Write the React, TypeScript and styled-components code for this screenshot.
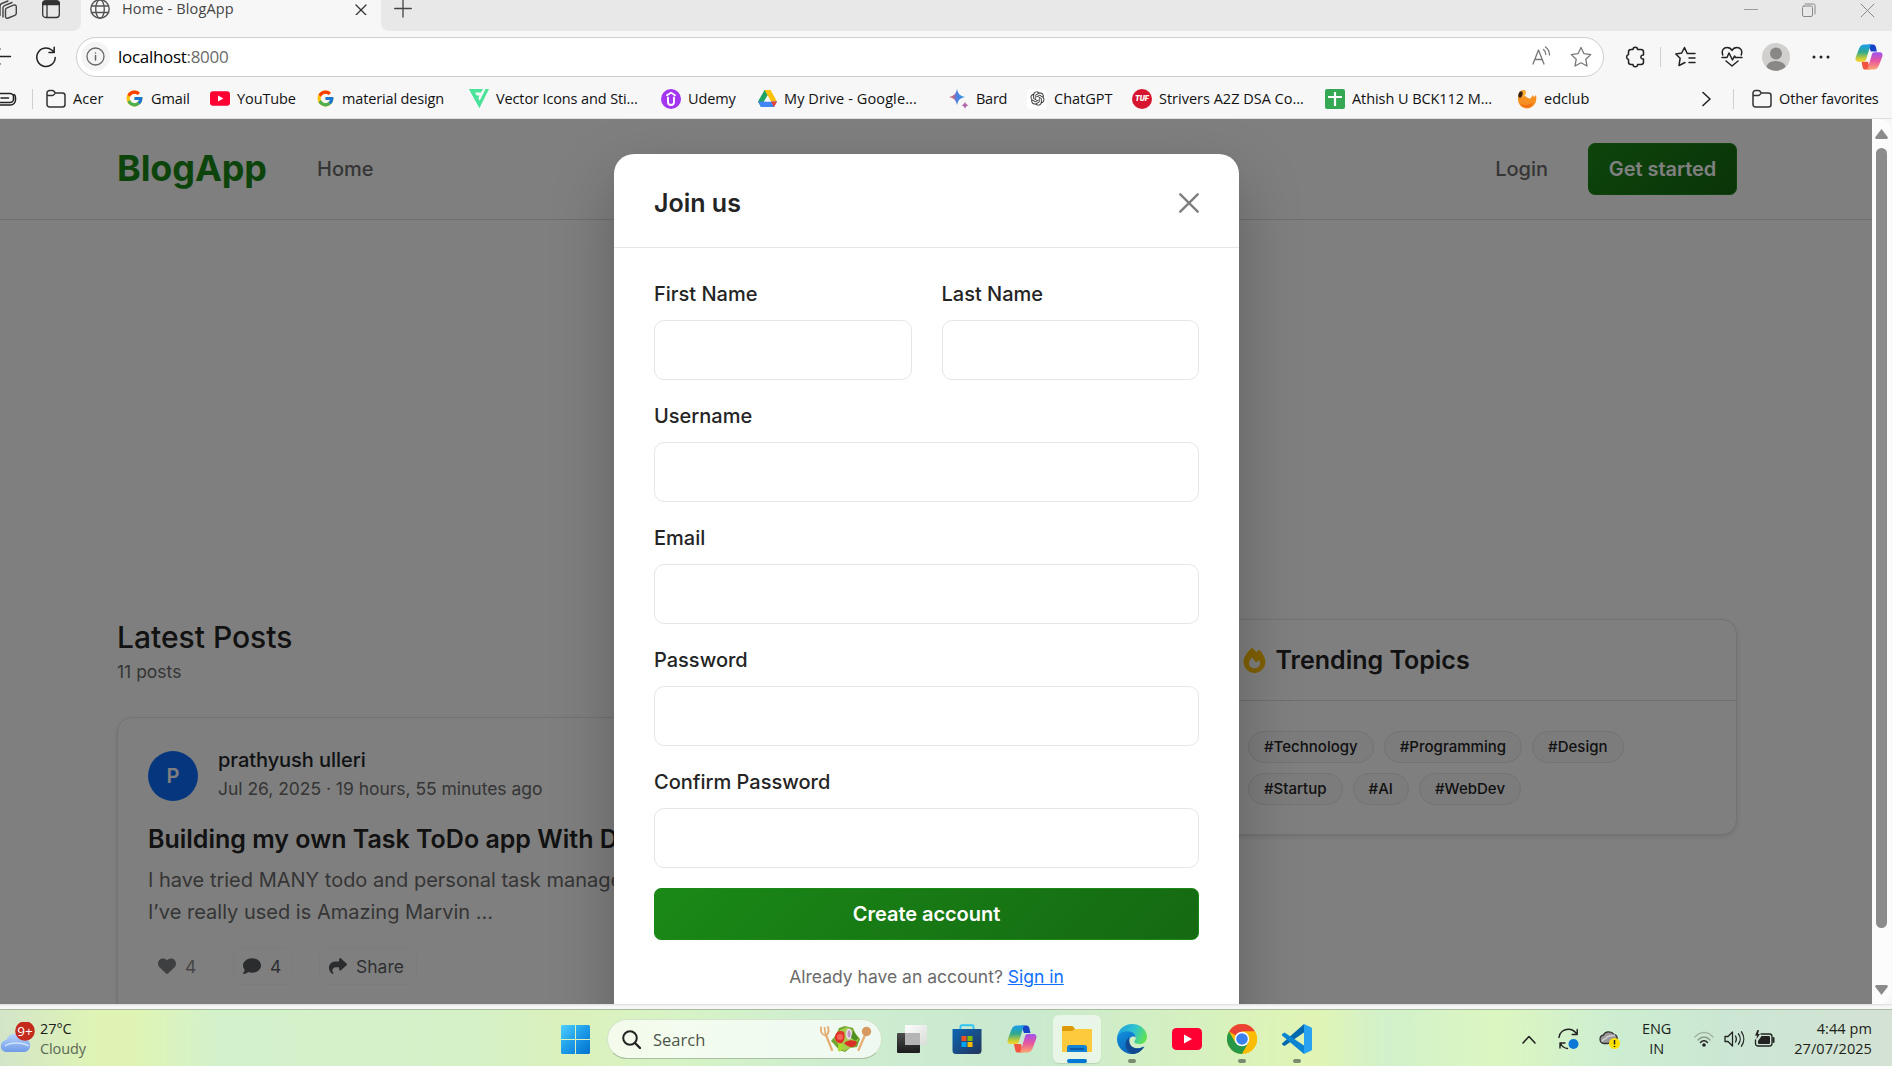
import React from "react";
import styled, { createGlobalStyle } from "styled-components";
import { FaComment, FaFire, FaHeart, FaShare } from "react-icons/fa6";
import { FcGoogle } from "react-icons/fc";
import { RiOpenaiFill } from "react-icons/ri";

const GlobalStyle = createGlobalStyle`
  * { box-sizing: border-box; }
  html, body { margin: 0; padding: 0; overflow: hidden; }
  body { font-family: "Inter", "Liberation Sans", sans-serif; }
  svg { display: block; flex: none; }
`;

const Desktop = styled.div`
  width: 1892px;
  height: 1066px;
  display: flex;
  flex-direction: column;
  overflow: hidden;
  background: #f7f7f7;
`;

/* ---------- browser chrome ---------- */

const uiFont = `"Open Sans", "Noto Sans", sans-serif`;

const TabStrip = styled.div`
  height: 31px;
  display: flex;
  background: #f7f7f7;
  font-family: ${uiFont};
  overflow: hidden;
`;

const StripLeft = styled.div`
  width: 81px;
  display: flex;
  gap: 25px;
  padding-left: 0;
  background: #e8e8e8;
  border-bottom-right-radius: 8px;
`;

const Tab = styled.div`
  width: 300px;
  height: 18px;
  display: flex;
  align-items: center;
  padding: 0 14px 0 9px;
`;

const TabTitle = styled.span`
  flex: 1;
  padding-left: 12px;
  font-size: 14.5px;
  line-height: 18px;
  letter-spacing: 0.15px;
  color: #444;
`;

const StripRight = styled.div`
  flex: 1;
  display: flex;
  justify-content: space-between;
  padding: 0 17px 0 13px;
  background: #e8e8e8;
  border-bottom-left-radius: 8px;
`;

const WindowButtons = styled.div`
  display: flex;
  gap: 44px;
  padding-top: 3px;
`;

const Toolbar = styled.div`
  height: 51px;
  display: flex;
  align-items: center;
  font-family: ${uiFont};
`;

const NavButtons = styled.div`
  width: 76px;
  display: flex;
  align-items: center;
  gap: 23px;
`;

const AddressBar = styled.div`
  width: 1528px;
  height: 40px;
  display: flex;
  align-items: center;
  padding: 0 11px 0 4px;
  border: 1px solid #cdcdcd;
  border-radius: 20px;
  background: #fff;
`;

const SiteInfo = styled.div`
  width: 29px;
  height: 29px;
  display: flex;
  align-items: center;
  justify-content: center;
  border-radius: 50%;
  background: #f4f4f4;
`;

const Url = styled.span`
  flex: 1;
  padding-left: 8px;
  font-size: 17px;
  letter-spacing: -0.3px;
  color: #000;
`;

const Port = styled.span`
  color: #6b6b6b;
`;

const BarIcons = styled.div`
  display: flex;
  gap: 19px;
`;

const ToolIcons = styled.div`
  flex: 1;
  display: flex;
  align-items: center;
  padding-left: 21px;
`;

const Slot = styled.div<{ $w: number }>`
  width: ${(p) => p.$w}px;
  flex: none;
  display: flex;
  align-items: center;
`;

const Divider = styled.div`
  width: 1px;
  height: 20px;
  flex: none;
  background: #cfcfcf;
`;

const Favorites = styled.div`
  height: 37px;
  display: flex;
  align-items: center;
  padding-bottom: 3px;
  border-bottom: 1px solid #dedede;
  font-family: ${uiFont};
`;

const Favorite = styled.div<{ $w: number }>`
  width: ${(p) => p.$w}px;
  flex: none;
  display: flex;
  align-items: center;
  gap: 7px;
`;

const FavoriteIcon = styled.div`
  width: 20px;
  height: 20px;
  flex: none;
  display: flex;
  align-items: center;
  justify-content: center;
`;

const FavoriteLabel = styled.span<{ $ls: number }>`
  font-size: 14.5px;
  line-height: 20px;
  letter-spacing: ${(p) => p.$ls}px;
  white-space: nowrap;
  color: #111;
`;

/* ---------- page ---------- */

const Viewport = styled.div`
  position: relative;
  height: 885px;
  display: flex;
  overflow: hidden;
`;

const Page = styled.div`
  position: relative;
  width: 1872px;
  height: 885px;
  overflow: hidden;
  background: #fff;
`;

const Scrollbar = styled.div`
  width: 19px;
  display: flex;
  flex-direction: column;
  align-items: center;
  padding: 10px 1px 9px 0;
  background: #fcfcfc;
  border-radius: 0 12px 12px 0;
`;

const Thumb = styled.div`
  width: 11px;
  height: 780px;
  margin: 9px 0 57px;
  border-radius: 6px;
  background: #8b8b8b;
`;

const SiteHeader = styled.header`
  height: 101px;
  display: flex;
  align-items: center;
  padding: 0 135px 0 117px;
  border-bottom: 1px solid #e1e1e1;
`;

const Brand = styled.div`
  width: 200px;
  padding-bottom: 2px;
  font-size: 36px;
  font-weight: 700;
  letter-spacing: -0.1px;
  color: #1a8917;
`;

const NavLink = styled.a`
  font-size: 20px;
  font-weight: 500;
  color: #6b6b6b;
`;

const NavEnd = styled.nav`
  margin-left: auto;
  display: flex;
  align-items: center;
  gap: 40px;
`;

const GreenButton = styled.button<{ $w: string }>`
  width: ${(p) => p.$w};
  height: 52px;
  border: 1px solid #1a8917;
  border-radius: 7px;
  background: linear-gradient(135deg, #1a8917 0%, #156912 100%);
  color: #fff;
  font: 600 20px "Inter", sans-serif;
  letter-spacing: -0.05px;
`;

const Main = styled.main`
  display: flex;
  gap: 30px;
  padding: 399px 135px 0 117px;
`;

const Feed = styled.section`
  flex: 1;
`;

const FeedTitle = styled.h2`
  margin: 0;
  font-size: 30px;
  line-height: 36px;
  font-weight: 500;
  color: #242424;
`;

const FeedCount = styled.p`
  margin: 3px 0 31px;
  font-size: 17.5px;
  line-height: 28px;
  color: #6b6b6b;
`;

const Card = styled.article`
  border: 1px solid #e6e6e6;
  border-radius: 15px;
  background: #fff;
  box-shadow: 0 2px 5px rgba(0, 0, 0, 0.12);
`;

const PostCard = styled(Card)`
  height: 420px;
  padding: 27px 30px;
`;

const Author = styled.div`
  display: flex;
  align-items: center;
  gap: 20px;
`;

const Avatar = styled.div`
  width: 50px;
  height: 50px;
  margin-top: 4px;
  display: flex;
  align-items: center;
  justify-content: center;
  border-radius: 50%;
  background: #0d6efd;
  color: #fff;
  font-size: 20px;
  font-weight: 600;
`;

const AuthorName = styled.div`
  font-size: 20px;
  line-height: 30px;
  font-weight: 500;
  letter-spacing: -0.05px;
  color: #212529;
`;

const PostDate = styled.div`
  font-size: 17.5px;
  line-height: 28px;
  letter-spacing: -0.03px;
  color: #6b6b6b;
`;

const PostTitle = styled.h3`
  margin: 20px 0 9px;
  font-size: 25px;
  line-height: 32px;
  font-weight: 600;
  white-space: nowrap;
  color: #242424;
`;

const Excerpt = styled.p`
  margin: 0;
  font-size: 20px;
  line-height: 32px;
  color: #6b6b6b;
`;

const Actions = styled.div`
  display: flex;
  align-items: center;
  gap: 26px;
  margin-top: 19px;
`;

const Action = styled.div<{ $w: number; $muted?: boolean }>`
  width: ${(p) => p.$w}px;
  height: 38px;
  display: flex;
  align-items: center;
  gap: 9px;
  padding-left: 9px;
  border: 1px solid ${(p) => (p.$muted ? "transparent" : "#f8f9fa")};
  border-radius: 8px;
  font-size: 17.5px;
  color: ${(p) => (p.$muted ? "#8d8d8d" : "#5c5f63")};
`;

const ActionIcon = styled.span<{ $dark?: boolean }>`
  display: flex;
  color: ${(p) => (p.$dark ? "#55585b" : "#7c7f82")};
`;

const Sidebar = styled.aside`
  width: 525px;
`;

const CardHead = styled.div`
  height: 81px;
  display: flex;
  align-items: center;
  gap: 9px;
  padding: 0 28.5px;
  border-bottom: 1px solid #e1e1e1;
`;

const CardHeading = styled.h4`
  margin: 0;
  font-size: 25px;
  font-weight: 600;
  color: #242424;
`;

const Chips = styled.div`
  display: flex;
  flex-wrap: wrap;
  gap: 10px;
  padding: 30px 80px 29px 35px;
`;

const Chip = styled.span`
  height: 32px;
  display: flex;
  align-items: center;
  padding: 0 15px 1px;
  border: 1px solid #e6e6e6;
  border-radius: 16px;
  background: #f8f9fa;
  font-size: 15px;
  font-weight: 500;
  letter-spacing: 0.02px;
  color: #242424;
`;

/* ---------- modal ---------- */

const Backdrop = styled.div`
  position: absolute;
  inset: 0;
  padding: 35px 0 0 614px;
  background: rgba(0, 0, 0, 0.5);
`;

const Dialog = styled.div`
  width: 625px;
  height: 960px;
  border-radius: 20px;
  background: #fff;
  box-shadow: 0 25px 62px rgba(0, 0, 0, 0.25);
`;

const DialogHead = styled.div`
  height: 94px;
  display: flex;
  align-items: center;
  justify-content: space-between;
  padding: 4px 40px 0;
  border-bottom: 1px solid #e6e6e6;
`;

const DialogTitle = styled.h5`
  margin: 0;
  font-size: 25px;
  line-height: 36px;
  font-weight: 600;
  color: #242424;
`;

const Form = styled.form`
  display: flex;
  flex-direction: column;
  gap: 20px;
  padding: 30px 40px;
`;

const FieldRow = styled.div`
  display: grid;
  grid-template-columns: 1fr 1fr;
  gap: 30px;
`;

const Field = styled.label`
  display: flex;
  flex-direction: column;
  gap: 10px;
  font-size: 20px;
  line-height: 32px;
  font-weight: 500;
  color: #242424;
`;

const Input = styled.input`
  width: 100%;
  height: 60px;
  border: 1px solid #e6e6e6;
  border-radius: 10px;
  background: #fff;
  outline: none;
`;

const SignIn = styled.p`
  margin: 3px 0 0;
  text-align: center;
  font-size: 17.5px;
  line-height: 28px;
  color: #6b6b6b;
`;

const Link = styled.a`
  color: #0d6efd;
  text-decoration: underline;
`;

/* ---------- taskbar ---------- */

const Gap = styled.div`
  height: 5px;
  background: linear-gradient(#dedede, #f7f7f7 50%);
`;

const Taskbar = styled.footer`
  height: 57px;
  display: flex;
  align-items: center;
  padding-top: 2px;
  border-top: 1px solid #a9bb9f;
  font-family: ${uiFont};
  background: linear-gradient(
    90deg,
    #d3e5c8 0,
    #dff4b4 100px,
    #dff4b4 135px,
    #d3f1cb 215px,
    #d5f1c8 470px,
    #dbf1bb 570px,
    #d6f3c6 680px,
    #ceedd0 830px,
    #c9e9d0 1020px,
    #d6f1bf 1200px,
    #e0f4b4 1315px,
    #d2f1cb 1385px,
    #dcf6c0 1500px,
    #cdeed1 1610px,
    #cbe7d3 1720px,
    #d4e2d3 1892px
  );
`;

const Weather = styled.div`
  width: 561px;
  display: flex;
  align-items: center;
  gap: 9px;
`;

const Lines = styled.div<{ $align?: string }>`
  display: flex;
  flex-direction: column;
  align-items: ${(p) => p.$align || "flex-start"};
  font-size: 14.5px;
  line-height: 20px;
  letter-spacing: -0.1px;
  color: #1c1f1a;
  white-space: nowrap;
`;

const Muted = styled.span`
  color: #5b6856;
`;

const SearchBox = styled.div`
  width: 275px;
  height: 40px;
  display: flex;
  align-items: center;
  margin: 0 6px 0 17px;
  padding: 0 9px 0 14px;
  border: 1px solid #d3e4ca;
  border-bottom-color: #a8bfa0;
  border-radius: 20px;
  background: rgba(255, 255, 255, 0.7);
`;

const SearchText = styled.span`
  flex: 1;
  padding-left: 12px;
  font-size: 16.5px;
  color: #4d554a;
`;

const AppTile = styled.div<{ $active?: boolean }>`
  position: relative;
  width: 48px;
  height: 48px;
  margin-right: 7px;
  flex: none;
  display: flex;
  align-items: center;
  justify-content: center;
  border-radius: 6px;
  background: ${(p) => (p.$active ? "rgba(255,255,255,0.55)" : "transparent")};
  box-shadow: ${(p) => (p.$active ? "0 1px 1px rgba(0,0,0,0.1)" : "none")};
`;

const Indicator = styled.span<{ $active?: boolean }>`
  position: absolute;
  bottom: 0;
  left: ${(p) => (p.$active ? 14 : 20)}px;
  width: ${(p) => (p.$active ? 20 : 8)}px;
  height: 4px;
  border-radius: 2px;
  background: ${(p) => (p.$active ? "#0078d4" : "#7b8b70")};
`;

const Tray = styled.div`
  flex: 1;
  display: flex;
  align-items: center;
  justify-content: flex-end;
  padding-right: 20px;
`;

const Clock = styled(Lines)`
  width: 100%;
  align-items: flex-end;
  letter-spacing: 0.08px;
`;

/* ---------- icons ---------- */

const line = { fill: "none", strokeLinecap: "round" as const, strokeLinejoin: "round" as const };

const FolderIcon = () => (
  <svg width="20" height="20" viewBox="0 0 20 20" {...line} stroke="#333" strokeWidth="1.5">
    <path d="M1 4a2.500 2.500 0 0 1 2.500-2.500h3C7.500 1.500 8 2 9 3.500l.5.500h7A2.500 2.500 0 0 1 19 6.500v9a2.500 2.500 0 0 1-2.500 2.500h-13A2.500 2.500 0 0 1 1 15.500zM1 6.500h5.500C8 6.500 8 5 9.500 4" />
  </svg>
);

const YouTubeIcon = ({ w, h }: { w: number; h: number }) => (
  <svg width={w} height={h} viewBox="0 0 30 22">
    <rect width="30" height="22" rx="4.5" fill="#ff0033" />
    <path d="M12 6.500l8 4.500-8 4.500z" fill="#fff" />
  </svg>
);

const CopilotIcon = ({ id, size }: { id: string; size: number }) => (
  <svg width={size} height={size} viewBox="0 0 30 30">
    <defs>
      <linearGradient id={id + "a"} x1="0" y1="0" x2="0" y2="1">
        <stop offset="0" stopColor="#1a9bf0" />
        <stop offset=".45" stopColor="#30a98c" />
        <stop offset=".8" stopColor="#c4cc3a" />
        <stop offset="1" stopColor="#f8d52c" />
      </linearGradient>
      <linearGradient id={id + "b"} x1="0" y1="0" x2="0" y2="1">
        <stop offset="0" stopColor="#a052ec" />
        <stop offset=".5" stopColor="#e8569f" />
        <stop offset="1" stopColor="#fba66c" />
      </linearGradient>
    </defs>
    <path d="M14 1.500h5.500c1.600 0 2.300 1 2.800 2.600L23.500 9H17z" fill="#1743c8" />
    <path d="M16 28.500h-5c-1.600 0-2.400-1-2.800-2.600L7 20h7z" fill="#f2553f" />
    <path d="M10 1.500h8.500c-1.300 0-2 1-2.400 2.300L12 17.500C11.500 19.300 10.600 20 9 20H3.500C1 20 0 18 .700 15.500L4.500 5.500C5.500 3 7.300 1.500 10 1.500z" fill={`url(#${id}a)`} />
    <path d="M20 28.500h-8.500c1.300 0 2-1 2.400-2.300L18 12.500C18.500 10.700 19.400 10 21 10h5.500c2.500 0 3.500 2 2.800 4.500l-3.800 10C24.500 27 22.700 28.500 20 28.500z" fill={`url(#${id}b)`} />
  </svg>
);

const UdemyIcon = () => (
  <svg width="20" height="20" viewBox="0 0 20 20" {...line}>
    <circle cx="10" cy="10" r="10" fill="#a435f0" />
    <path d="M6 6.300l4-2.500 4 2.500M7 8.500v4.500a3 3 0 0 0 6 0V8.500" stroke="#fff" strokeWidth="1.900" />
  </svg>
);

const DriveIcon = () => (
  <svg width="19" height="17" viewBox="0 0 19 17">
    <path d="M6.500 0h3.300v5.200L3 17 0 11.500z" fill="#1fa463" />
    <path d="M6.500 0h6L9.500 5.300z" fill="#0f8f4f" />
    <path d="M6.500 0h6L19 11.500h-6z" fill="#ffc107" />
    <path d="M0 11.500h19l-3 5.500H3z" fill="#4285f4" />
    <path d="M13 11.500h6L16 17z" fill="#ea4335" />
    <path d="M9.500 5.500L13 11.500H6z" fill="#f7f7f7" />
  </svg>
);

const BardIcon = () => (
  <svg width="20" height="20" viewBox="0 0 20 20">
    <defs>
      <linearGradient id="bard" x1="0" y1="0" x2="1" y2="0">
        <stop offset="0" stopColor="#b070b0" />
        <stop offset=".2" stopColor="#d96570" />
        <stop offset=".5" stopColor="#4c7fe8" />
        <stop offset="1" stopColor="#2f9bd8" />
      </linearGradient>
    </defs>
    <path d="M8 0c1.200 5 3 6.800 8 8-5 1.200-6.800 3-8 8-1.200-5-3-6.800-8-8 5-1.200 6.800-3 8-8z" fill="url(#bard)" />
    <path d="M16 12.500c.6 2.300 1.400 3.100 3.700 3.700-2.300.6-3.100 1.400-3.700 3.700-.6-2.300-1.400-3.100-3.700-3.700 2.300-.6 3.100-1.400 3.700-3.700z" fill="#b264a8" />
  </svg>
);

const ChatGptBox = styled.div`
  width: 20px;
  height: 20px;
  display: flex;
  align-items: center;
  justify-content: center;
  border-radius: 4px;
  background: #fff;
  color: #333;
`;

const TufBadge = styled.div`
  width: 20px;
  height: 20px;
  display: flex;
  align-items: center;
  justify-content: center;
  border-radius: 50%;
  background: #d8152f;
  color: #fff;
  font: italic 900 7px "Inter", sans-serif;
`;

const SheetsIcon = () => (
  <svg width="20" height="20" viewBox="0 0 20 20">
    <rect width="20" height="20" rx="2" fill="#34a853" />
    <path d="M10 3v14M3 8h14" stroke="#fff" strokeWidth="2.200" />
  </svg>
);

const EdclubIcon = () => (
  <svg width="20" height="20" viewBox="0 0 20 20">
    <path d="M1.500 6C2.500 2 6 0 8 1.500c1.500 1.500 0 4-.5 5.500 2 .5 3.500 2.500 5 2.500S15 8 15 6l2 2 2-2c1.500 7-2 13-9 13.500C3 19.500-.5 13 1.500 6z" fill="#f79023" />
    <path d="M3 14c3 3 9 3 13-1-1 4-4 6-7 5.500S3.500 16 3 14z" fill="#f36c12" />
    <path d="M5 3c2-2.500 5-1.500 4 1L7 8 4 7z" fill="#fbb03b" />
    <ellipse cx="3.500" cy="5.500" rx="2" ry="3.200" fill="#3a2012" transform="rotate(20 3.500 5.500)" />
  </svg>
);

const VectorIcon = () => (
  <svg width="20" height="19" viewBox="0 0 20 19">
    <path d="M0 0h14l-2 3.500H5.500L7 6.500h3.500L9 10H8.500l1.500 3L16.500 0H20l-9.500 19z" fill="#4be39a" />
    <path d="M0 0l10.500 19 1-6L5 2z" fill="#4be39a" />
  </svg>
);

const GlobeIcon = () => (
  <svg width="20" height="22" viewBox="0 0 20 22" {...line} stroke="#555" strokeWidth="1.400">
    <circle cx="10" cy="11" r="9.200" />
    <ellipse cx="10" cy="11" rx="4.300" ry="9.200" />
    <path d="M1.500 8h17M1.500 14.500h17" />
  </svg>
);

const ChromeIcon = () => (
  <svg width="30" height="30" viewBox="0 0 30 30">
    <circle cx="15" cy="15" r="15" fill="#fbbc04" />
    <path d="M15 15L2 7.500A15 15 0 0 1 28 7.500H15z" fill="#ea4335" />
    <path d="M15 15l-6.500 3.700L2 7.500A15 15 0 0 0 15 30l6.500-11.300z" fill="#279847" />
    <path d="M15 7.500h13A15 15 0 0 1 15 30l6.500-11.300z" fill="#fbbc04" />
    <circle cx="15" cy="15" r="7.300" fill="#fff" />
    <circle cx="15" cy="15" r="5.800" fill="#3b82ed" />
  </svg>
);

const EdgeIcon = () => (
  <svg width="30" height="30" viewBox="0 0 30 30">
    <defs>
      <linearGradient id="edgeTop" x1="0" y1=".3" x2="1" y2=".6">
        <stop offset="0" stopColor="#1f9fe0" />
        <stop offset=".55" stopColor="#30c4cc" />
        <stop offset="1" stopColor="#62e34e" />
      </linearGradient>
      <linearGradient id="edgeBody" x1="0" y1="0" x2=".6" y2="1">
        <stop offset="0" stopColor="#1290de" />
        <stop offset="1" stopColor="#0a62b4" />
      </linearGradient>
    </defs>
    <path d="M0 14C.8 5.500 7.500 0 15 0c9 0 15 6.500 15 12.500 0 5-3.500 7.500-7.500 7.500-3 0-5.300-1-5.300-2.300 0-1 1.600-1.700 1.600-4C18.800 10.500 15.500 8 11 8 6 8 1.500 10.500 0 14z" fill="url(#edgeTop)" />
    <path d="M0 15c0-5 5-7.800 10.500-7.800 4.700 0 8.300 2.800 8.300 6.500-1.500-2-6.800-1.500-6.800 3.800 0 6 7 9 14.500 5C24.500 27 20 30 15 30 6.500 30 0 23 0 15z" fill="url(#edgeBody)" />
    <path d="M12 13.500c-5 3.500-5 12.500 3 16.500 5 0 9.500-2.500 12.500-7.500-5 3.300-12.500 2.500-14.500-2.500-1-2.300-.5-5-1-6.500z" fill="#114a91" />
  </svg>
);

const VsCodeIcon = () => (
  <svg width="30" height="30" viewBox="0 0 30 30">
    <path d="M0 19.500L22 0v8.500L2.500 22 0 20.500z" fill="#0069ad" />
    <path d="M0 11.500V10l2.500-1.500L22 21.500V30z" fill="#0a85d1" />
    <path d="M22 0l7 3.200c.7.400 1 .9 1 1.800v20c0 .9-.3 1.400-1 1.800L22 30z" fill="#27a3f2" />
  </svg>
);

const ExplorerIcon = () => (
  <svg width="30" height="28" viewBox="0 0 30 28">
    <path d="M0 8V2.500C0 1.700.6 1 1.500 1h8c1 0 1.600.4 2.500 1.500L13 4v4z" fill="#dc9a08" />
    <path d="M0 6h10.500l2-2H29c.6 0 1 .4 1 1v22H0z" fill="#fdc93d" />
    <path d="M5 27v-4.500C5 21 6 20 7.500 20h15c1.500 0 2.500 1 2.500 2.500V27z" fill="#1282d4" />
    <path d="M8.500 24h13" stroke="#0b4f96" strokeWidth="1.300" strokeLinecap="round" />
  </svg>
);

const StoreIcon = () => (
  <svg width="30" height="30" viewBox="0 0 30 30">
    <defs>
      <linearGradient id="store" x1="0" y1="0" x2="1" y2="1">
        <stop offset="0" stopColor="#0d67b5" />
        <stop offset="1" stopColor="#24335a" />
      </linearGradient>
    </defs>
    <path d="M8.500 6V2.500c0-.8.500-1.300 1.300-1.300h10.400c.8 0 1.300.5 1.300 1.300V6" fill="none" stroke="#2ec4f3" strokeWidth="1.900" />
    <path d="M.5 5h29v21.500a3.500 3.500 0 0 1-3.500 3.500H4a3.500 3.500 0 0 1-3.500-3.500z" fill="url(#store)" />
    <path d="M9.500 12h5v5h-5z" fill="#f25022" />
    <path d="M15.500 12h5v5h-5z" fill="#7fba00" />
    <path d="M9.500 18h5v5h-5z" fill="#00a4ef" />
    <path d="M15.500 18h5v5h-5z" fill="#ffb900" />
  </svg>
);

const TaskViewIcon = () => (
  <svg width="30" height="30" viewBox="0 0 30 30">
    <defs>
      <linearGradient id="taskDark" x1="0" y1="0" x2="0" y2="1">
        <stop offset="0" stopColor="#4c4c4c" />
        <stop offset="1" stopColor="#1c1c1c" />
      </linearGradient>
      <linearGradient id="taskLight" x1="0" y1="0" x2="1" y2="1">
        <stop offset="0" stopColor="#fdfdfd" />
        <stop offset="1" stopColor="#d9dcd9" />
      </linearGradient>
    </defs>
    <rect x="0" y="9" width="23" height="20" rx="1" fill="url(#taskDark)" />
    <rect x="8" y="1" width="22" height="20" rx="1" fill="url(#taskLight)" />
    <path d="M8 9h15v12H8z" fill="#b5b5b5" />
  </svg>
);

const WindowsIcon = () => (
  <svg width="29" height="29" viewBox="0 0 29 29">
    <defs>
      <linearGradient id="win" gradientUnits="userSpaceOnUse" x1="0" y1="0" x2="29" y2="29">
        <stop offset="0" stopColor="#4ccfff" />
        <stop offset=".5" stopColor="#1d9be8" />
        <stop offset="1" stopColor="#0072d0" />
      </linearGradient>
    </defs>
    <path d="M1 0h13v14H0V1zM15 0h13l1 1v13H15zM0 15h14v14H1l-1-1zM15 15h14v13l-1 1H15z" fill="url(#win)" />
  </svg>
);

const SaladIcon = () => (
  <svg width="52" height="26" viewBox="0 0 52 26">
    <path d="M6 9l6 15" stroke="#e5ad72" strokeWidth="2.200" strokeLinecap="round" />
    <path d="M1 1.500c-.5 4 1 7.500 4.500 8 3-1.500 3.500-5 2.500-8.500" {...line} stroke="#e5ad72" strokeWidth="1.900" />
    <path d="M4.500 1l1 8" stroke="#e5ad72" strokeWidth="1.600" />
    <path d="M45 9l-6.500 15" stroke="#e5ad72" strokeWidth="2.200" strokeLinecap="round" />
    <circle cx="46.500" cy="5.500" r="4.700" fill="#d69a60" />
    <path d="M11 15l5-6 3-7 6-2 8 2 2 5 5 6-3 8-7 1-5 4-6-2-5-6z" fill="#71a52f" />
    <path d="M14 13l6-9 7-3 8 5 3 8-6 7-8 4-6-7z" fill="#a5cd4a" />
    <path d="M15 10c1-5 6-6 9-4 1 4 1 8-2 11-4 1-8-2-7-7z" fill="#e0332b" />
    <circle cx="20" cy="11" r="3" fill="#f26455" />
    <path d="M24 17c5-4 10-3 13-1-1 6-8 7-13 1z" fill="#dc2f28" />
    <ellipse cx="29" cy="8" rx="3.200" ry="5.500" fill="#ead9ec" />
    <ellipse cx="29" cy="8" rx="1.500" ry="3.500" fill="#bd96c4" />
    <path d="M18 19c3-3 6 0 5 3s-3 4-5 3z" fill="#a8dc2e" />
    <path d="M33 4l5 8-2 3-5-3z" fill="#4f8f22" />
  </svg>
);

const WeatherIcon = () => (
  <svg width="36" height="34" viewBox="0 0 36 34">
    <defs>
      <linearGradient id="cloud" x1="0" y1="0" x2="0" y2="1">
        <stop offset="0" stopColor="#b8d5fb" />
        <stop offset="1" stopColor="#709ae8" />
      </linearGradient>
    </defs>
    <path d="M7 30a6 6 0 0 1-.5-12A9 9 0 0 1 23 16.500 6.800 6.800 0 0 1 24.500 30z" fill="url(#cloud)" />
    <path d="M5 24c5-4 17-4 24 0" stroke="#cfe2ff" strokeWidth="1.300" fill="none" />
    <circle cx="25" cy="9" r="9.800" fill="#c42b1c" />
    <text x="25" y="14" fontSize="13.500" fontFamily="Open Sans, sans-serif" textAnchor="middle" fill="#fff">9+</text>
  </svg>
);

const favorites = [
  { label: "Acer", w: 78, ls: 0.1, icon: <FolderIcon /> },
  { label: "Gmail", w: 86, ls: -0.1, icon: <FcGoogle size={19} /> },
  { label: "YouTube", w: 105, ls: -0.1, icon: <YouTubeIcon w={20} h={15} /> },
  { label: "material design", w: 154, ls: -0.15, icon: <FcGoogle size={19} /> },
  { label: "Vector Icons and Sti...", w: 192, ls: -0.12, icon: <VectorIcon /> },
  { label: "Udemy", w: 96, ls: -0.1, icon: <UdemyIcon /> },
  { label: "My Drive - Google...", w: 192, ls: 0.1, icon: <DriveIcon /> },
  { label: "Bard", w: 78, ls: -0.25, icon: <BardIcon /> },
  { label: "ChatGPT", w: 105, ls: 0, icon: <ChatGptBox><RiOpenaiFill size={17} /></ChatGptBox> },
  { label: "Strivers A2Z DSA Co...", w: 193, ls: 0, icon: <TufBadge>TUF</TufBadge> },
  { label: "Athish U BCK112 M...", w: 192, ls: -0.07, icon: <SheetsIcon /> },
  { label: "edclub", w: 185, ls: 0, icon: <EdclubIcon /> },
];

const tags = ["#Technology", "#Programming", "#Design", "#Startup", "#AI", "#WebDev"];

const BrowserTabs = () => (
  <TabStrip>
    <StripLeft>
      <svg width="17" height="22" viewBox="0 0 17 22" {...line} stroke="#444" strokeWidth="1.400">
        <path d="M0 15.500V6.500C0 5 .5 4 1.800 3.500L8 1M3 17V8c0-1.200.5-2 1.500-2.400L12 2.500" />
        <path d="M5.500 16.500V10c0-1 .5-1.800 1.500-2.200l6.500-2.600c1.500-.6 2.800.1 2.800 1.600v6.400c0 1-.5 1.700-1.500 2.100L8.300 18c-1.500.6-2.800 0-2.800-1.500z" />
      </svg>
      <svg width="18" height="22" viewBox="0 0 18 22" {...line} stroke="#333" strokeWidth="1.300">
        <rect x=".7" y="1" width="16.600" height="16.500" rx="3" />
        <path d="M.7 4.500V3.500c0-2 1-2.700 3-2.700h10.600c2 0 3 .7 3 2.700v1z" fill="#333" />
        <path d="M5 5v12" />
      </svg>
    </StripLeft>
    <Tab>
      <GlobeIcon />
      <TabTitle>Home - BlogApp</TabTitle>
      <svg width="12" height="12" viewBox="0 0 12 12" {...line} stroke="#333" strokeWidth="1.300">
        <path d="M1 2l10 10M11 2L1 12" />
      </svg>
    </Tab>
    <StripRight>
      <svg width="18" height="18" viewBox="0 0 18 18" {...line} stroke="#444" strokeWidth="1.300">
        <path d="M.7 8.500h16.600M9 0v17" />
      </svg>
      <WindowButtons>
        <svg width="14" height="14" viewBox="0 0 14 14" {...line} stroke="#999"><path d="M.5 6.500h13" /></svg>
        <svg width="14" height="14" viewBox="0 0 14 14" {...line} stroke="#888">
          <rect x=".5" y="3" width="10" height="10.500" rx="1.500" />
          <path d="M3 1h8.500c1 0 1.500.5 1.500 1.500V11" />
        </svg>
        <svg width="15" height="15" viewBox="0 0 15 15" {...line} stroke="#888"><path d="M1 1l13 13M14 1L1 14" /></svg>
      </WindowButtons>
    </StripRight>
  </TabStrip>
);

const BrowserToolbar = () => (
  <Toolbar>
    <NavButtons>
      <svg width="12" height="20" viewBox="0 0 12 20" {...line} stroke="#222" strokeWidth="1.400">
        <path d="M-5 9.500h15.500M0 2l-3 3M0 17l-3-3" />
      </svg>
      <svg width="22" height="22" viewBox="0 0 22 22" {...line} stroke="#222" strokeWidth="1.500">
        <path d="M20.200 11.500a9.200 9.200 0 1 1-3.500-7.500l2.500 2.300M19.200 1.200v5.300H14" />
      </svg>
    </NavButtons>
    <AddressBar>
      <SiteInfo>
        <svg width="19" height="19" viewBox="0 0 19 19" {...line} stroke="#666" strokeWidth="1.300">
          <circle cx="9.500" cy="9.500" r="8.500" />
          <path d="M9.500 8.500v4.500M9.500 5.900v.2" strokeWidth="1.500" />
        </svg>
      </SiteInfo>
      <Url>localhost<Port>:8000</Port></Url>
      <BarIcons>
        <svg width="19" height="21" viewBox="0 0 19 21" {...line} stroke="#777" strokeWidth="1.300">
          <path d="M1 18L6.500 4 12 18M3 13.500h7.200M11.500 3.500c1.500 1.200 2.300 3 2.300 5M13.500 1c2.500 1.800 4 4.500 4 8" />
        </svg>
        <svg width="22" height="21" viewBox="0 0 22 21" {...line} stroke="#777" strokeWidth="1.300">
          <path d="M11 1.500l3 6.200 6.700.9-4.900 4.700 1.200 6.700-6-3.200-6 3.200 1.200-6.700L1.300 8.600 8 7.700z" />
        </svg>
      </BarIcons>
    </AddressBar>
    <ToolIcons>
      <Slot $w={35}>
        <svg width="21" height="22" viewBox="0 0 21 22" {...line} stroke="#222" strokeWidth="1.500">
          <path d="M8 3.500a2.300 2.300 0 0 1 4.600 0H16a2.500 2.500 0 0 1 2.500 2.500v3c-3.500-.6-3.500 4.600 0 4v3a2.500 2.500 0 0 1-2.500 2.500h-3.400a2.300 2.300 0 0 1-4.600 0H6A2.500 2.500 0 0 1 3.500 16v-2.500a2.600 2.600 0 0 1 0-5V6A2.500 2.500 0 0 1 6 3.500z" />
        </svg>
      </Slot>
      <Slot $w={15}><Divider /></Slot>
      <Slot $w={46}>
        <svg width="21" height="21" viewBox="0 0 21 21" {...line} stroke="#222" strokeWidth="1.500">
          <path d="M12.500 7.500H20M14 12h6M14 16.500h6M12.200 7.500L9.500 1.500 6.700 7 .8 8l4.300 4.300L4 19.500l6-3" />
        </svg>
      </Slot>
      <Slot $w={41}>
        <svg width="22" height="21" viewBox="0 0 22 21" {...line} stroke="#222" strokeWidth="1.500">
          <path d="M1.800 9C0 4 3 1.500 6 1.500c2.200 0 4 1 5 3 1-2 2.800-3 5-3 3 0 6 2.500 4.200 7.500M1 11.500h5l2-4.500 3.500 7 2-4 1 1.500H21M5 15l6 5 6-5" />
        </svg>
      </Slot>
      <Slot $w={49}>
        <svg width="28" height="28" viewBox="0 0 28 28">
          <circle cx="14" cy="14" r="14" fill="#d2d0ce" />
          <circle cx="14" cy="10.500" r="6" fill="#8a8886" />
          <path d="M4.500 24c1-8 18-8 19 0a14 14 0 0 1-19 0z" fill="#8a8886" />
        </svg>
      </Slot>
      <Slot $w={44}>
        <svg width="20" height="4" viewBox="0 0 20 4" fill="#222">
          <circle cx="3" cy="2" r="1.500" /><circle cx="10" cy="2" r="1.500" /><circle cx="17" cy="2" r="1.500" />
        </svg>
      </Slot>
      <CopilotIcon id="bar" size={28} />
    </ToolIcons>
  </Toolbar>
);

const FavoritesBar = () => (
  <Favorites>
    <Slot $w={32}>
      <svg width="17" height="16" viewBox="0 0 17 16" {...line} stroke="#222" strokeWidth="1.500">
        <path d="M-3 2.500h13A3.500 3.500 0 0 1 13.500 6v2a3.500 3.500 0 0 1-3.500 3.500H-3M-3 14h13.500a5 5 0 0 0 5-5V6.500c0-1.500-.5-2.500-1.500-3M1 7h7.500" />
      </svg>
    </Slot>
    <Slot $w={14}><Divider /></Slot>
    {favorites.map((f) => (
      <Favorite key={f.label} $w={f.w}>
        <FavoriteIcon>{f.icon}</FavoriteIcon>
        <FavoriteLabel $ls={f.ls}>{f.label}</FavoriteLabel>
      </Favorite>
    ))}
    <Slot $w={31}>
      <svg width="9" height="16" viewBox="0 0 9 16" {...line} stroke="#222" strokeWidth="1.600"><path d="M1 1.500l7 6.500-7 6.500" /></svg>
    </Slot>
    <Slot $w={19}><Divider /></Slot>
    <Favorite $w={130}>
      <FavoriteIcon><FolderIcon /></FavoriteIcon>
      <FavoriteLabel $ls={-0.15}>Other favorites</FavoriteLabel>
    </Favorite>
  </Favorites>
);

const BlogPage = () => (
  <>
    <SiteHeader>
      <Brand>BlogApp</Brand>
      <NavLink>Home</NavLink>
      <NavEnd>
        <NavLink>Login</NavLink>
        <GreenButton $w="149px">Get started</GreenButton>
      </NavEnd>
    </SiteHeader>
    <Main>
      <Feed>
        <FeedTitle>Latest Posts</FeedTitle>
        <FeedCount>11 posts</FeedCount>
        <PostCard>
          <Author>
            <Avatar>P</Avatar>
            <div>
              <AuthorName>prathyush ulleri</AuthorName>
              <PostDate>Jul 26, 2025 · 19 hours, 55 minutes ago</PostDate>
            </div>
          </Author>
          <PostTitle>Building my own Task ToDo app With D</PostTitle>
          <Excerpt>
            I have tried MANY todo and personal task manage
            <br />
            I’ve really used is Amazing Marvin ...
          </Excerpt>
          <Actions>
            <Action $w={59} $muted><ActionIcon><FaHeart size={18} /></ActionIcon>4</Action>
            <Action $w={60}><ActionIcon $dark><FaComment size={18} /></ActionIcon>4</Action>
            <Action $w={98}><ActionIcon $dark><FaShare size={18} /></ActionIcon>Share</Action>
          </Actions>
        </PostCard>
      </Feed>
      <Sidebar>
        <Card>
          <CardHead>
            <FaFire size={25} color="#ffc107" />
            <CardHeading>Trending Topics</CardHeading>
          </CardHead>
          <Chips>
            {tags.map((t) => <Chip key={t}>{t}</Chip>)}
          </Chips>
        </Card>
      </Sidebar>
    </Main>
  </>
);

const TextField = ({ label }: { label: string }) => (
  <Field>{label}<Input /></Field>
);

const JoinDialog = () => (
  <Backdrop>
    <Dialog>
      <DialogHead>
        <DialogTitle>Join us</DialogTitle>
        <svg width="20" height="20" viewBox="0 0 20 20" {...line} stroke="#7f7f7f" strokeWidth="2.400">
          <path d="M1.300 1.300l17.400 17.400M18.700 1.300L1.300 18.700" />
        </svg>
      </DialogHead>
      <Form>
        <FieldRow>
          <TextField label="First Name" />
          <TextField label="Last Name" />
        </FieldRow>
        <TextField label="Username" />
        <TextField label="Email" />
        <TextField label="Password" />
        <TextField label="Confirm Password" />
        <GreenButton type="button" $w="100%">Create account</GreenButton>
        <SignIn>Already have an account? <Link>Sign in</Link></SignIn>
      </Form>
    </Dialog>
  </Backdrop>
);

const apps = [
  { id: "task", icon: <TaskViewIcon /> },
  { id: "store", icon: <StoreIcon /> },
  { id: "copilot", icon: <CopilotIcon id="task" size={30} /> },
  { id: "explorer", icon: <ExplorerIcon />, active: true, open: true },
  { id: "edge", icon: <EdgeIcon />, open: true },
  { id: "youtube", icon: <YouTubeIcon w={30} h={22} /> },
  { id: "chrome", icon: <ChromeIcon />, open: true },
  { id: "code", icon: <VsCodeIcon />, open: true },
];

const WindowsTaskbar = () => (
  <Taskbar>
    <Weather>
      <Slot $w={31}><WeatherIcon /></Slot>
      <Lines><span>27°C</span><Muted>Cloudy</Muted></Lines>
    </Weather>
    <WindowsIcon />
    <SearchBox>
      <svg width="19" height="19" viewBox="0 0 19 19" {...line} stroke="#222" strokeWidth="2">
        <circle cx="8" cy="8" r="6.800" /><path d="M13 13l5 5" strokeWidth="2.400" />
      </svg>
      <SearchText>Search</SearchText>
      <SaladIcon />
    </SearchBox>
    {apps.map((a) => (
      <AppTile key={a.id} $active={a.active}>
        {a.icon}
        {a.open && <Indicator $active={a.active} />}
      </AppTile>
    ))}
    <Tray>
      <Slot $w={36}>
        <svg width="14" height="9" viewBox="0 0 14 9" {...line} stroke="#222" strokeWidth="1.600"><path d="M1 8l6-6.500L13 8" /></svg>
      </Slot>
      <Slot $w={41}>
        <svg width="22" height="22" viewBox="0 0 22 22" {...line} stroke="#222" strokeWidth="1.400">
          <path d="M1 9.500C1.500 4 6 1.200 10.500 1.200c4 0 6.500 2 8.500 5M19.200 1.500v5h-5M2 20v-5h5M2.500 15.500c1.500 3 4 4.700 7 5" />
          <circle cx="15.500" cy="16" r="5" fill="#0b78d8" stroke="none" />
        </svg>
      </Slot>
      <Slot $w={43}>
        <svg width="22" height="22" viewBox="0 0 22 22">
          <path d="M5 15.500a4.300 4.300 0 0 1-.5-8.500C6 3.500 12 2.500 15 6.500c2.500.5 3.500 2.500 3 4.500L9 15.500z" fill="#999" stroke="#333" strokeWidth="1.300" />
          <path d="M3 13.500c1-3 4-2 5-4.500 3-2 6-1 8-2" stroke="#ccc" strokeWidth="1.800" fill="none" />
          <circle cx="15.500" cy="15.500" r="5.500" fill="#ffe100" />
          <path d="M15.500 12v4.500M15.500 18v1" stroke="#222" strokeWidth="1.500" />
        </svg>
      </Slot>
      <Slot $w={52}><Lines $align="center"><span>ENG</span><span>IN</span></Lines></Slot>
      <Slot $w={30}>
        <svg width="20" height="17" viewBox="0 0 20 17" {...line} strokeWidth="1.400">
          <path d="M1 6c5-6 13-6 18 0" stroke="#a5b5a5" />
          <path d="M4 9c3.500-4 8.500-4 12 0" stroke="#8a9a8a" />
          <path d="M6.500 11.500c2-2.300 5-2.300 7 0" stroke="#222" />
          <circle cx="10" cy="14" r="1.800" fill="#222" />
        </svg>
      </Slot>
      <Slot $w={30}>
        <svg width="21" height="18" viewBox="0 0 21 18" {...line} stroke="#222" strokeWidth="1.300">
          <path d="M1 6.500h3L8.500 2v14L4 11.500H1zM11.500 6c1 1.800 1 4.200 0 6M14.500 3.800c2.200 3 2.200 7.400 0 10.400M17.500 1.800c3 4.300 3 10.100 0 14.400" />
        </svg>
      </Slot>
      <Slot $w={38}>
        <svg width="21" height="18" viewBox="0 0 21 18" {...line} stroke="#222" strokeWidth="1.300">
          <path d="M7 4h8.500A2.500 2.500 0 0 1 18 6.500v7a2.500 2.500 0 0 1-2.500 2.500H4a2.500 2.500 0 0 1-2.500-2.500V10" />
          <path d="M7.500 6h7c1 0 1.500.5 1.500 1.500v5c0 1-.5 1.500-1.500 1.500h-9c-1 0-1.500-.5-1.500-1.500V11z" fill="#222" stroke="none" />
          <path d="M19.500 8v4" strokeWidth="2" />
          <path d="M3.500 0L1 5.500h2L2.500 9 6 4H4L5 0z" fill="#222" stroke="none" />
        </svg>
      </Slot>
      <Slot $w={80}>
        <Clock><span>4:44 pm</span><span>27/07/2025</span></Clock>
      </Slot>
    </Tray>
  </Taskbar>
);

export default function App() {
  return (
    <Desktop>
      <GlobalStyle />
      <BrowserTabs />
      <BrowserToolbar />
      <FavoritesBar />
      <Viewport>
        <Page>
          <BlogPage />
          <JoinDialog />
        </Page>
        <Scrollbar>
          <svg width="13" height="10" viewBox="0 0 13 10"><path d="M6.500 0L13 8.500 12 10H1L0 8.500z" fill="#8b8b8b" /></svg>
          <Thumb />
          <svg width="13" height="10" viewBox="0 0 13 10"><path d="M6.500 10L13 1.500 12 0H1L0 1.500z" fill="#8b8b8b" /></svg>
        </Scrollbar>
      </Viewport>
      <Gap />
      <WindowsTaskbar />
    </Desktop>
  );
}
